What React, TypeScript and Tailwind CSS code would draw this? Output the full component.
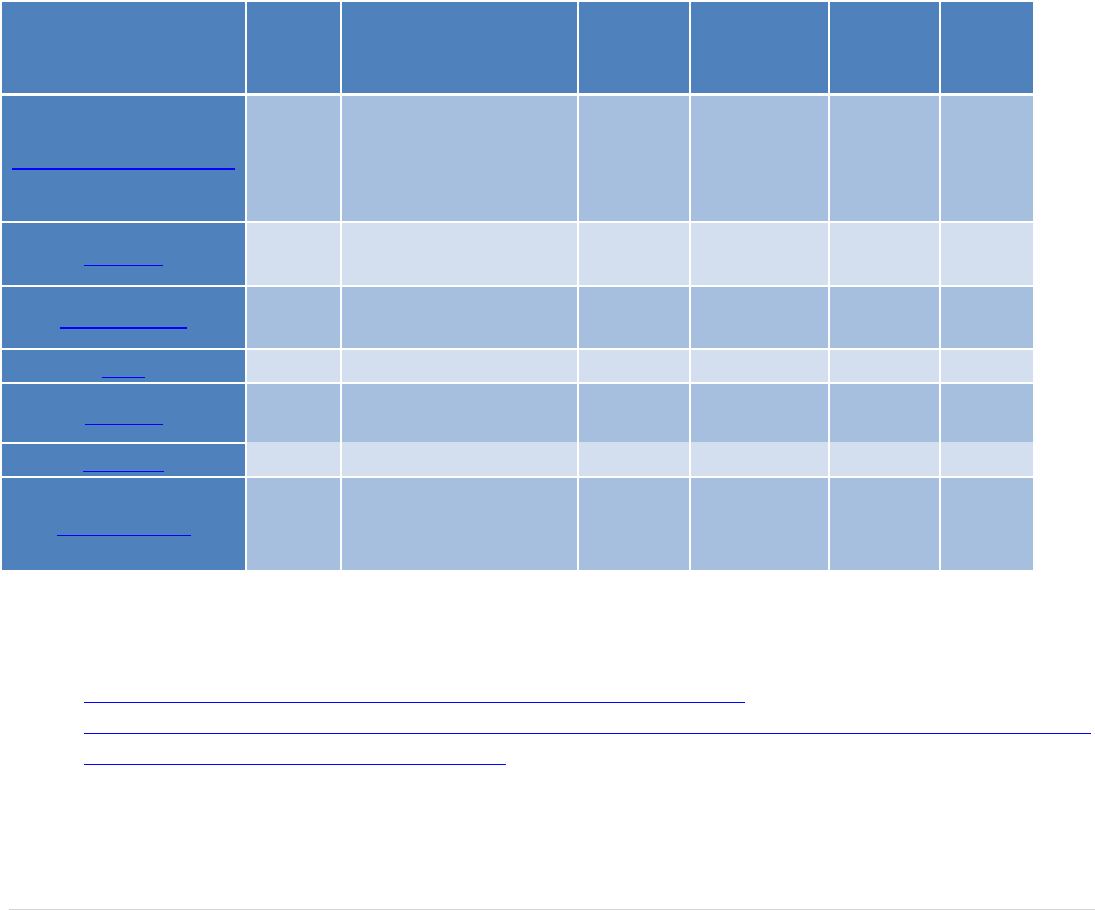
const cols = "grid grid-cols-[243px_93px_235px_110px_137px_109px_92px] gap-x-[2px]";

type Row = { h: string; band: "dark" | "light"; link: string; thick?: boolean; split?: boolean };

const rows: Row[] = [
  { h: "h-[125px]", band: "dark", link: "w-[223px]", thick: true },
  { h: "h-[62px]", band: "light", link: "w-[79px]" },
  { h: "h-[61px]", band: "dark", link: "w-[127px]", thick: true },
  { h: "h-[32px]", band: "light", link: "w-[43px]" },
  { h: "h-[58px]", band: "dark", link: "w-[78px]" },
  { h: "h-[34px]", band: "light", link: "w-[81px]", split: true },
  { h: "h-[92px]", band: "dark", link: "w-[134px]" },
];

function LinkLine({ width, thick }: { width: string; thick?: boolean }) {
  return (
    <a
      href="#"
      className={`inline-block h-[23px] border-[#0000ff] ${width} ${thick ? "border-b-2" : "border-b"}`}
    />
  );
}

export default function App() {
  return (
    <div className="w-[1095px] h-[910px] bg-white overflow-hidden font-['Liberation_Sans',sans-serif]">
      <div className="pt-[2px] pl-[2px] flex flex-col">
        <div className={`${cols} h-[91px]`}>
          {Array.from({ length: 7 }).map((_, i) => (
            <div key={i} className="bg-[#4f81bd]" />
          ))}
        </div>

        {rows.map((r, i) => {
          const fill = r.band === "dark" ? "bg-[#a7bfde]" : "bg-[#d3dfee]";
          const top = i === 0 ? "mt-[3px]" : r.split ? "" : "mt-[2px]";
          return (
            <div key={i} className={`${cols} ${r.h} ${top}`}>
              <div className={`bg-[#4f81bd] flex items-center justify-center ${r.split ? "mt-[2px]" : ""}`}>
                <LinkLine width={r.link} thick={r.thick} />
              </div>
              {Array.from({ length: 6 }).map((_, j) => (
                <div key={j} className={fill} />
              ))}
            </div>
          );
        })}
      </div>

      <ul className="mt-[110px] pl-[84px] flex flex-col">
        <li className="h-[31px]">
          <LinkLine width="w-[661px]" />
        </li>
        <li className="h-[31px]">
          <LinkLine width="w-[1007px]" />
        </li>
        <li className="h-[31px]">
          <LinkLine width="w-[422px]" />
        </li>
      </ul>

      <div className="mt-[136px] ml-[9px] h-px bg-[#d4d4d4]" />
    </div>
  );
}
